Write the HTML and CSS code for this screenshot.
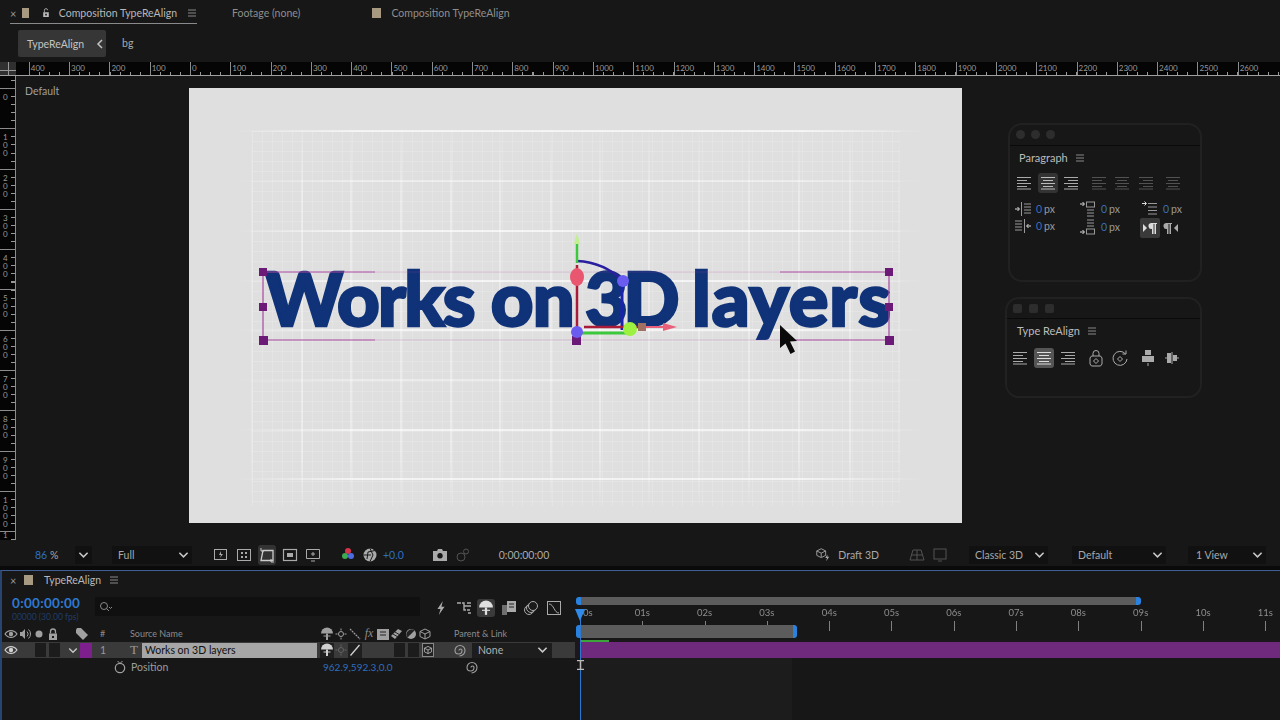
FILE: index.html
```html
<!doctype html>
<html lang="en">
<head>
	<meta charset="UTF-8">
	<title>Composition TypeReAlign</title>
	<link rel="stylesheet" href="styles.css">
</head>
<body>
	<svg class="defs" width="0" height="0">
		<symbol id="menu" viewBox="0 0 10 10"><path d="M1 2h8M1 5h8M1 8h8" stroke="currentColor" fill="none"/></symbol>
		<symbol id="chev" viewBox="0 0 12 8"><path d="M1.500 1.500 6 6l4.500-4.500" stroke="currentColor" stroke-width="1.700" fill="none"/></symbol>
		<symbol id="al-l" viewBox="0 0 16 16"><path d="M1 2.500h14M1 5.500h10M1 8.500h14M1 11.500h10M1 14h14" stroke="currentColor" fill="none"/></symbol>
		<symbol id="al-c" viewBox="0 0 16 16"><path d="M1 2.500h14M3 5.500h10M1 8.500h14M3 11.500h10M1 14h14" stroke="currentColor" fill="none"/></symbol>
		<symbol id="al-r" viewBox="0 0 16 16"><path d="M1 2.500h14M5 5.500h10M1 8.500h14M5 11.500h10M1 14h14" stroke="currentColor" fill="none"/></symbol>
		<symbol id="in-l" viewBox="0 0 18 16"><path d="M7.500 1v14M10 3h7M10 6h7M10 9h7M10 12h7" stroke="currentColor" fill="none"/><path d="M1 8h4M3.500 6l2 2-2 2" stroke="#ddd" fill="none"/></symbol>
		<symbol id="in-r" viewBox="0 0 18 16"><path d="M10.500 1v14M1 3h7M1 6h7M1 9h7M1 12h7" stroke="currentColor" fill="none"/><path d="M17 8h-4M14.500 6l-2 2 2 2" stroke="#ddd" fill="none"/></symbol>
		<symbol id="in-t" viewBox="0 0 18 16"><path d="M1 3h4M3.500 1l2 2-2 2" stroke="#ddd" fill="none"/><rect x="7.500" y="1" width="8" height="5" stroke="currentColor" fill="none"/><path d="M8 9h7M8 12h7M8 15h7" stroke="currentColor" fill="none"/></symbol>
		<symbol id="in-b" viewBox="0 0 18 16"><path d="M8 1h7M8 4h7M8 7h7" stroke="currentColor" fill="none"/><path d="M1 13h4M3.500 11l2 2-2 2" stroke="#ddd" fill="none"/><rect x="7.500" y="10" width="8" height="5" stroke="currentColor" fill="none"/></symbol>
		<symbol id="in-f" viewBox="0 0 18 16"><path d="M1 2.500h4M3.500 .5l2 2-2 2" stroke="#ddd" fill="none"/><path d="M7 2.500h9M7 6h9M7 9.500h9M7 13h9" stroke="currentColor" fill="none"/></symbol>
		<symbol id="ltr" viewBox="0 0 16 16"><path d="M1 4l4 4-4 4z" fill="currentColor"/><path d="M9 3h6v1h-1v10h-1.500V4H11.500v10H10V9a3 3 0 0 1-1-6z" fill="currentColor"/></symbol>
		<symbol id="rtl" viewBox="0 0 16 16"><path d="M15 4l-4 4 4 4z" fill="currentColor"/><path d="M3 3h6v1H8v10H6.500V4H5.500v10H4V9a3 3 0 0 1-1-6z" fill="currentColor"/></symbol>
		<symbol id="lock-c" viewBox="0 0 16 18"><path d="M5 7V4.500a3 3 0 0 1 6 0V7" stroke="currentColor" fill="none"/><path d="M3.500 7h9l1.500 2v6l-1.500 2h-9L2 15V9z" stroke="currentColor" fill="none"/><path d="M8 9.500 10.500 12 8 14.500 5.500 12z" stroke="currentColor" fill="none"/></symbol>
		<symbol id="rot-c" viewBox="0 0 16 18"><path d="M13.500 5A7 7 0 1 0 15 10" stroke="currentColor" fill="none"/><path d="M10.500 5h3.500V1.500" stroke="currentColor" fill="none"/><path d="M8 7.500 10.500 10 8 12.500 5.500 10z" stroke="currentColor" fill="none"/></symbol>
		<symbol id="dist-v" viewBox="0 0 16 18"><path d="M5 1h6v5H5zM2 7h12v6H2z" fill="currentColor"/><path d="M8 14v3" stroke="currentColor"/></symbol>
		<symbol id="dist-h" viewBox="0 0 16 18"><path d="M1 9h2M13 9h2M8 3v12" stroke="currentColor" fill="none"/><path d="M3 4h4v10H3zM9 6h4v6H9z" fill="currentColor"/></symbol>
		<symbol id="eye" viewBox="0 0 14 14"><path d="M1 7c3-4.500 9-4.500 12 0-3 4.500-9 4.500-12 0z" stroke="currentColor" stroke-width="1.200" fill="none"/><circle cx="7" cy="7" r="2.200" fill="currentColor"/></symbol>
		<symbol id="speaker" viewBox="0 0 14 14"><path d="M2 5h2l3-3v10L4 9H2z" fill="currentColor"/><path d="M9 4.500a3.500 3.500 0 0 1 0 5M10.500 2.500a6 6 0 0 1 0 9" stroke="currentColor" fill="none"/></symbol>
		<symbol id="solo" viewBox="0 0 14 14"><circle cx="7" cy="7" r="3.500" fill="currentColor"/></symbol>
		<symbol id="lock" viewBox="0 0 14 14"><path d="M4.500 6.500V4.500a2.500 2.500 0 0 1 5 0v2" stroke="currentColor" stroke-width="1.300" fill="none"/><path d="M3 6.500h8V13H3zM6 9v2h2V9z" fill="currentColor" fill-rule="evenodd"/></symbol>
		<symbol id="tag" viewBox="0 0 14 14"><path d="M1 3l1-2h4l7 7-5 5-7-7z" fill="currentColor"/></symbol>
		<symbol id="shy" viewBox="0 0 14 14"><path d="M1 6.500a6 6 0 0 1 12 0z" fill="currentColor"/><path d="M6 6.500h2V13H6z" fill="currentColor"/><path d="M3.500 9h7" stroke="currentColor"/></symbol>
		<symbol id="sun" viewBox="0 0 14 14"><circle cx="7" cy="7" r="2.500" stroke="currentColor" fill="none"/><path d="M7 1.500v2M7 10.500v2M1.500 7h2M10.500 7h2" stroke="currentColor"/></symbol>
		<symbol id="slash" viewBox="0 0 14 14"><path d="M2 2l10 10" stroke="currentColor" stroke-width="1.200" stroke-dasharray="2 .7"/></symbol>
		<symbol id="slash-b" viewBox="0 0 14 14"><path d="M2.500 12.500 11.500 2" stroke="currentColor" stroke-width="1.300"/></symbol>
		<symbol id="blend" viewBox="0 0 14 14"><rect x="1" y="2" width="12" height="11" fill="currentColor"/><path d="M4 5h6M4 8h6" stroke="#222"/></symbol>
		<symbol id="layers" viewBox="0 0 14 14"><path d="M1 9 8 2l4 2-7 8z" fill="currentColor"/><path d="M3 7l5 3M5 5l5 3" stroke="#222"/></symbol>
		<symbol id="half" viewBox="0 0 14 14"><circle cx="7" cy="7" r="5" fill="currentColor"/><path d="M3.500 10.500 10.500 3.500 A5 5 0 0 0 3.500 10.500z" fill="#222"/></symbol>
		<symbol id="cube" viewBox="0 0 14 14"><path d="M7 2l5 2.500v5L7 12l-5-2.500v-5zM2 4.500 7 7l5-2.500M7 7v5" stroke="currentColor" fill="none"/></symbol>
		<symbol id="spiral" viewBox="0 0 14 14"><path d="M7 7.500a1.500 1.500 0 0 1 3 0 3.500 3.500 0 0 1-7 0 5 5 0 0 1 5-5 5 5 0 0 1 5 5 5.500 5.500 0 0 1-5.500 5.500" stroke="currentColor" stroke-width="1.100" fill="none"/></symbol>
		<symbol id="watch" viewBox="0 0 14 14"><circle cx="7" cy="8" r="4.700" stroke="currentColor" stroke-width="1.200" fill="none"/><path d="M4.500 1l2 2M9.500 1l-2 2" stroke="currentColor"/></symbol>
		<symbol id="bolt" viewBox="0 0 14 18"><path d="M9 1 3 10h3.500L4.500 17 11 7.500H7.500z" fill="currentColor"/></symbol>
		<symbol id="tree" viewBox="0 0 16 16"><path d="M1 3h4M6 3h2v7h2M8 6h3M11 3h4M11 6h4M11 10h3M12 13h3" stroke="currentColor" stroke-width="1.400" fill="none"/></symbol>
		<symbol id="precomp" viewBox="0 0 16 16"><path d="M6 1h9v11H6z" fill="currentColor"/><path d="M1 5h5v10H1z" fill="currentColor" opacity=".6"/><path d="M8 4h5M8 7h5" stroke="#222"/></symbol>
		<symbol id="motion" viewBox="0 0 16 16"><circle cx="6" cy="10" r="4.500" stroke="currentColor" fill="none"/><circle cx="8" cy="8" r="4.500" stroke="currentColor" fill="none"/><circle cx="10" cy="6" r="4.500" stroke="currentColor" fill="#1a1a1a"/></symbol>
		<symbol id="graph" viewBox="0 0 16 16"><rect x="1.500" y="1.500" width="13" height="13" stroke="currentColor" fill="none"/><path d="M3 4c5 0 5 9 10 9" stroke="currentColor" fill="none"/></symbol>
		<symbol id="snap" viewBox="0 0 16 16"><rect x="1.500" y="2.500" width="12" height="10" stroke="currentColor" fill="none"/><path d="M8 4 6 8h2l-1 3 3-4H8z" fill="currentColor"/></symbol>
		<symbol id="grid-ic" viewBox="0 0 16 16"><rect x="1.500" y="2.500" width="13" height="11" stroke="currentColor" fill="none"/><path d="M5 5h2v2H5zM9 5h2v2H9zM5 9h2v2H5zM9 9h2v2H9z" fill="currentColor"/></symbol>
		<symbol id="mask" viewBox="0 0 16 16"><path d="M4 3.500h10v10H2z" stroke="currentColor" stroke-width="1.300" fill="none"/><path d="M2 1v3h3M12 12v3h3" stroke="currentColor" fill="none"/></symbol>
		<symbol id="safe" viewBox="0 0 16 16"><rect x="1.500" y="2.500" width="13" height="11" stroke="currentColor" stroke-width="1.200" fill="none"/><rect x="5" y="6" width="6" height="4" fill="currentColor"/></symbol>
		<symbol id="region" viewBox="0 0 16 16"><path d="M1.500 2.500h13v9h-13zM8 5v4M6 7h4M6 14h4" stroke="currentColor" fill="none"/></symbol>
		<symbol id="color" viewBox="0 0 16 16"><circle cx="8" cy="4" r="3" fill="#d8344c"/><circle cx="5" cy="9" r="3" fill="#3eaa52"/><circle cx="11" cy="9" r="3" fill="#4c6de0"/></symbol>
		<symbol id="aperture" viewBox="0 0 16 16"><circle cx="8" cy="8" r="6.500" fill="currentColor"/><path d="M8 1.500 11 8 8 14.500M1.500 8H9M13 3.500 6 5l-1 7" stroke="#1a1a1a" fill="none"/></symbol>
		<symbol id="camera" viewBox="0 0 16 16"><path d="M1 4h4l1-2h4l1 2h4v10H1zM8 6a2.800 2.800 0 1 0 .01 0z" fill="currentColor" fill-rule="evenodd"/></symbol>
		<symbol id="show-snap" viewBox="0 0 16 16"><circle cx="6" cy="10" r="4" stroke="currentColor" fill="none"/><circle cx="11" cy="4.500" r="2.500" stroke="currentColor" fill="none"/></symbol>
		<symbol id="draft" viewBox="0 0 18 16"><path d="M7 1.500l5 2.500v5l-5 2.500L2 9V4zM2 4l5 2.500L12 4M7 6.500V11" stroke="currentColor" fill="none"/><path d="M14 8l-2.500 4h2l-1 3.500 3.500-5h-2z" fill="currentColor"/></symbol>
		<symbol id="floor" viewBox="0 0 16 16"><path d="M4 3h8l3 10H1zM8 3v10M2.500 8h11" stroke="currentColor" fill="none"/></symbol>
		<symbol id="frame-ic" viewBox="0 0 16 16"><rect x="2" y="2" width="12" height="10" stroke="currentColor" fill="none"/><path d="M6 14h4" stroke="currentColor"/></symbol>
	</svg>

	<div class="app">
		<div class="tabs">
			<div class="tab tab-active">
				<span class="tab-x">×</span>
				<span class="swatch"></span>
				<svg class="tab-lock" viewBox="0 0 10 12"><path d="M3 5V2.500a2 2 0 0 1 4 0" stroke="currentColor" fill="none"/><path d="M1.500 5h7v6h-7zM4 7v2h2V7z" fill="currentColor" fill-rule="evenodd"/></svg>
				<span class="tab-name">Composition TypeReAlign</span>
				<svg class="ic-menu"><use href="#menu"/></svg>
			</div>
			<span class="tab tab-footage">Footage (none)</span>
			<div class="tab tab-comp2">
				<span class="swatch"></span>
				<span>Composition TypeReAlign</span>
			</div>
		</div>

		<div class="crumbs">
			<div class="crumb-on"><span>TypeReAlign</span><svg class="crumb-arrow" viewBox="0 0 8 10"><path d="M6 1 2 5l4 4" stroke="currentColor" stroke-width="1.500" fill="none"/></svg></div>
			<span class="crumb">bg</span>
		</div>

		<div class="hruler">
			<div class="hruler-corner"></div>
			<div class="hruler-scale">
				<span>400</span><span>300</span><span>200</span><span>100</span><span>0</span><span>100</span><span>200</span><span>300</span><span>400</span><span>500</span><span>600</span><span>700</span><span>800</span><span>900</span><span>1000</span><span>1100</span><span>1200</span><span>1300</span><span>1400</span><span>1500</span><span>1600</span><span>1700</span><span>1800</span><span>1900</span><span>2000</span><span>2100</span><span>2200</span><span>2300</span><span>2400</span><span>2500</span><span>2600</span>
			</div>
		</div>

		<div class="viewer">
			<div class="vruler">
				<span>0</span><span>100</span><span>200</span><span>300</span><span>400</span><span>500</span><span>600</span><span>700</span><span>800</span><span>900</span><span>1000</span><span>1</span>
			</div>
			<div class="canvas">
				<span class="view-name">Default</span>

				<div class="comp">
					<svg class="comp-grid" viewBox="189 88 773 435">
						<defs>
							<pattern id="fine" x="252" y="131" width="10" height="10" patternUnits="userSpaceOnUse">
								<path d="M0 0V10M0 0H10" stroke="#fff" stroke-opacity=".3" fill="none"/>
							</pattern>
							<linearGradient id="fade-x" gradientUnits="userSpaceOnUse" x1="235" y1="0" x2="925" y2="0">
								<stop offset="0" stop-color="#fff" stop-opacity="0"/>
								<stop offset=".18" stop-color="#fff" stop-opacity=".85"/>
								<stop offset=".82" stop-color="#fff" stop-opacity=".85"/>
								<stop offset="1" stop-color="#fff" stop-opacity="0"/>
							</linearGradient>
							<linearGradient id="fade-y" gradientUnits="userSpaceOnUse" x1="0" y1="125" x2="0" y2="510">
								<stop offset="0" stop-color="#fff" stop-opacity="0"/>
								<stop offset=".2" stop-color="#fff" stop-opacity=".7"/>
								<stop offset=".85" stop-color="#fff" stop-opacity=".7"/>
								<stop offset="1" stop-color="#fff" stop-opacity="0"/>
							</linearGradient>
						</defs>
						<rect x="252" y="131" width="648" height="375" fill="url(#fine)"/>
						<path class="grid-v" d="M302 125V510M351 125V510M401 125V510M451 125V510M500 125V510M551 125V510M600 125V510M649 125V510M699 125V510M749 125V510M799 125V510M850 125V510"/>
						<path class="grid-v grid-v-out" d="M252 125V510M899 125V510"/>
						<path class="grid-h" d="M235 131H925M235 231H925M235 281H925M235 330H925M235 430H925M235 479H925"/>
						<path class="grid-h grid-h-soft" d="M235 181H925M235 380H925"/>
					</svg>
					<div class="comp-text"><span class="w-works">Works</span> on <span class="w-3d">3D</span> <span class="w-layers">layers</span></div>
					<svg class="gizmo" viewBox="189 88 773 435">
						<path d="M263 272H375M780 272H889M263 340H375M780 340H889M263 272V340M889 272V340" stroke="#a8479f" stroke-width="1.200" fill="none"/>
						<path d="M375 272H780M375 340H780" stroke="#a8479f" stroke-opacity=".25" fill="none"/>
						<path d="M259 268h8v8h-8zM259 303h8v8h-8zM259 336h9v9h-9zM885 268h8v8h-8zM885 303h8v8h-8zM885 336h9v9h-9zM572 336h9v9h-9z" fill="#6b1a78"/>
						<path d="M577 261C597 262 612 270 623 281" stroke="#2a1fa0" stroke-width="2.500" fill="none"/>
						<path d="M622 285V330" stroke="#1a22b0" stroke-width="3"/>
						<path d="M577 334V265" stroke="#a81c3a" stroke-width="2.500"/>
						<path d="M577 263V243" stroke="#3cc83c" stroke-width="2.500"/>
						<path d="M574 244l3-11 3 11z" fill="#c0f090"/>
						<path d="M577 333H630" stroke="#3cc83c" stroke-width="3"/>
						<path d="M584 327H640" stroke="#a81c3a" stroke-width="2.500"/>
						<path d="M640 327H665" stroke="#e8607a" stroke-width="2"/>
						<path d="M663 323l14 4-14 4z" fill="#e8607a"/>
						<ellipse cx="577" cy="277" rx="7" ry="9" fill="#e85670"/>
						<circle cx="623" cy="281" r="6" fill="#6a5cf0"/>
						<circle cx="577" cy="332" r="6" fill="#6a5cf0"/>
						<circle cx="630" cy="329" r="7" fill="#9cf040"/>
						<rect x="638" y="323" width="8" height="8" fill="#a07060"/>
						<path d="M780 325V348L785.500 343.500 790.500 354 795 351.500 790 341.500 797 341z" fill="#0a0a0a"/>
					</svg>
				</div>

				<div class="float-panel float-para">
					<div class="float-title"><i></i><i></i><i></i></div>
					<div class="float-head"><span>Paragraph</span><svg class="ic-menu"><use href="#menu"/></svg></div>
					<div class="align-row">
						<svg class="ic-a"><use href="#al-l"/></svg>
						<span class="align-on"><svg class="ic-a"><use href="#al-c"/></svg></span>
						<svg class="ic-a"><use href="#al-r"/></svg>
						<svg class="ic-a dim gap-l"><use href="#al-l"/></svg>
						<svg class="ic-a dim"><use href="#al-c"/></svg>
						<svg class="ic-a dim"><use href="#al-r"/></svg>
						<svg class="ic-a dim gap-l"><use href="#al-c"/></svg>
					</div>
					<div class="indent-grid">
						<div class="indent"><svg class="ic-i"><use href="#in-l"/></svg><b>0</b> px</div>
						<div class="indent"><svg class="ic-i"><use href="#in-t"/></svg><b>0</b> px</div>
						<div class="indent"><svg class="ic-i"><use href="#in-f"/></svg><b>0</b> px</div>
						<div class="indent"><svg class="ic-i"><use href="#in-r"/></svg><b>0</b> px</div>
						<div class="indent indent-low"><svg class="ic-i"><use href="#in-b"/></svg><b>0</b> px</div>
						<div class="dir-btns">
							<span class="dir-on"><svg class="ic-d"><use href="#ltr"/></svg></span>
							<svg class="ic-d"><use href="#rtl"/></svg>
						</div>
					</div>
				</div>

				<div class="float-panel float-type">
					<div class="float-title float-title-sq"><i></i><i></i><i></i></div>
					<div class="float-head"><span>Type ReAlign</span><svg class="ic-menu"><use href="#menu"/></svg></div>
					<div class="align-row align-type">
						<svg class="ic-a"><use href="#al-l"/></svg>
						<span class="align-on align-on-lit"><svg class="ic-a"><use href="#al-c"/></svg></span>
						<svg class="ic-a"><use href="#al-r"/></svg>
						<svg class="ic-t gap-l"><use href="#lock-c"/></svg>
						<svg class="ic-t"><use href="#rot-c"/></svg>
						<svg class="ic-t gap-l"><use href="#dist-v"/></svg>
						<svg class="ic-t"><use href="#dist-h"/></svg>
					</div>
				</div>
			</div>
		</div>

		<div class="toolbar">
			<span class="zoom-val"><b>86</b> %</span>
			<span class="dd dd-zoom"><svg class="ic-chev"><use href="#chev"/></svg></span>
			<span class="dd dd-full">Full<svg class="ic-chev"><use href="#chev"/></svg></span>
			<div class="tool-icons tool-view">
				<svg class="ic-tool"><use href="#snap"/></svg>
				<svg class="ic-tool"><use href="#grid-ic"/></svg>
				<span class="tool-on"><svg class="ic-tool"><use href="#mask"/></svg></span>
				<svg class="ic-tool"><use href="#safe"/></svg>
				<svg class="ic-tool"><use href="#region"/></svg>
			</div>
			<div class="tool-icons tool-color">
				<svg class="ic-tool"><use href="#color"/></svg>
				<svg class="ic-tool"><use href="#aperture"/></svg>
				<b class="exposure">+0.0</b>
			</div>
			<div class="tool-icons tool-cam">
				<svg class="ic-tool"><use href="#camera"/></svg>
				<svg class="ic-tool dim"><use href="#show-snap"/></svg>
			</div>
			<span class="tool-time">0:00:00:00</span>
			<div class="toolbar-right">
				<span class="draft"><svg class="ic-draft"><use href="#draft"/></svg>Draft 3D</span>
				<div class="tool-icons tool-floor">
					<svg class="ic-tool dim"><use href="#floor"/></svg>
					<svg class="ic-tool dim"><use href="#frame-ic"/></svg>
				</div>
				<span class="dd dd-classic">Classic 3D<svg class="ic-chev"><use href="#chev"/></svg></span>
				<span class="dd dd-default">Default<svg class="ic-chev"><use href="#chev"/></svg></span>
				<span class="dd dd-view">1 View<svg class="ic-chev"><use href="#chev"/></svg></span>
			</div>
		</div>

		<div class="timeline">
			<div class="tl-tab">
				<span class="tab-x">×</span>
				<span class="swatch"></span>
				<span class="tl-name">TypeReAlign</span>
				<svg class="ic-menu"><use href="#menu"/></svg>
			</div>
			<div class="tl-body">
				<div class="tl-left">
					<div class="tl-ctrl">
						<div class="timecode"><b>0:00:00:00</b><span>00000 (30.00 fps)</span></div>
						<div class="search">
							<svg class="ic-search" viewBox="0 0 14 12"><circle cx="5" cy="5" r="3.500" stroke="currentColor" fill="none"/><path d="M7.500 7.500 10 10M10 6l1.500 1.500L13 6" stroke="currentColor" fill="none"/></svg>
						</div>
						<div class="tl-icons">
							<svg class="ic-tl"><use href="#bolt"/></svg>
							<svg class="ic-tl"><use href="#tree"/></svg>
							<span class="tl-icon-on"><svg class="ic-tl"><use href="#shy"/></svg></span>
							<svg class="ic-tl"><use href="#precomp"/></svg>
							<svg class="ic-tl"><use href="#motion"/></svg>
							<svg class="ic-tl"><use href="#graph"/></svg>
						</div>
					</div>
					<div class="tl-head">
						<div class="c-av">
							<svg class="ic-sm"><use href="#eye"/></svg>
							<svg class="ic-sm"><use href="#speaker"/></svg>
							<svg class="ic-sm"><use href="#solo"/></svg>
							<svg class="ic-sm"><use href="#lock"/></svg>
						</div>
						<div class="c-tag"><svg class="ic-sm"><use href="#tag"/></svg></div>
						<div class="c-num">#</div>
						<div class="c-name">Source Name</div>
						<div class="c-sw">
							<svg class="ic-sm"><use href="#shy"/></svg>
							<svg class="ic-sm"><use href="#sun"/></svg>
							<svg class="ic-sm"><use href="#slash"/></svg>
							<i class="fx">fx</i>
							<svg class="ic-sm"><use href="#blend"/></svg>
							<svg class="ic-sm"><use href="#layers"/></svg>
							<svg class="ic-sm"><use href="#half"/></svg>
							<svg class="ic-sm"><use href="#cube"/></svg>
						</div>
						<div class="c-parent">Parent &amp; Link</div>
					</div>
					<div class="tl-layer">
						<div class="c-av">
							<svg class="ic-sm ic-lit"><use href="#eye"/></svg>
							<span class="sw-box sw-a"></span><span class="sw-box"></span>
						</div>
						<div class="c-tag">
							<svg class="ic-twirl"><use href="#chev"/></svg>
							<span class="label-purple"></span>
						</div>
						<div class="c-num">1</div>
						<div class="c-name">
							<span class="type-t">T</span>
							<span class="layer-name">Works on 3D layers</span>
						</div>
						<div class="c-sw">
							<span class="sw-dark"><svg class="ic-sm ic-lit"><use href="#shy"/></svg></span>
							<svg class="ic-sm dim"><use href="#sun"/></svg>
							<span class="sw-dark"><svg class="ic-sm ic-lit"><use href="#slash-b"/></svg></span>
							<span class="sw-box sw-b"></span><span class="sw-box"></span>
							<span class="sw-3d"><svg class="ic-sm ic-lit"><use href="#cube"/></svg></span>
						</div>
						<div class="c-parent">
							<svg class="ic-sm"><use href="#spiral"/></svg>
							<span class="parent-dd">None<svg class="ic-chev"><use href="#chev"/></svg></span>
						</div>
					</div>
					<div class="tl-prop">
						<svg class="ic-sm"><use href="#watch"/></svg>
						<span class="prop-name">Position</span>
						<span class="prop-val">962.9,592.3,0.0</span>
						<svg class="ic-sm"><use href="#spiral"/></svg>
					</div>
				</div>
				<div class="tl-right">
					<div class="work-row"><div class="work-bar"></div></div>
					<div class="time-labels">
						<span>00s</span><span>01s</span><span>02s</span><span>03s</span><span>04s</span><span>05s</span><span>06s</span><span>07s</span><span>08s</span><span>09s</span><span>10s</span><span>11s</span>
					</div>
					<div class="time-ticks"><div class="nav-bar"></div></div>
					<div class="layer-track"><div class="green-line"></div><div class="purple-bar"></div></div>
					<div class="tracks-rest"></div>
					<div class="playhead"></div>
					<svg class="ibeam" viewBox="0 0 7 10"><path d="M0 .5h7M0 9.500h7M3.500 0v10" stroke="#bbb" stroke-width="1.500"/></svg>
				</div>
			</div>
		</div>
	</div>
</body>
</html>
```

FILE: styles.css
```css
html, body{
	margin: 0;
	padding: 0;
	background: #171717;
	overflow: hidden;
}
.defs{
	position: absolute;
}
.app{
	width: 1280px;
	height: 720px;
	display: flex;
	flex-direction: column;
	font-family: "Lato", "Noto Sans", sans-serif;
	font-size: 10.500px;
	color: #aaa;
	background: #171717;
	filter: blur(.4px);
}
svg{
	display: block;
	flex: none;
}
b{
	font-weight: 400;
}
.dim{
	opacity: .4;
}

/* tabs */
.tabs{
	height: 30px;
	display: flex;
	align-items: flex-start;
	flex: none;
}
.tab{
	display: flex;
	align-items: center;
	height: 20px;
	margin-top: 1px;
	padding-top: 2px;
	color: #8e8e8e;
	white-space: nowrap;
}
.tab-active{
	width: 187px;
	margin-left: 10px;
	color: #b8b8b8;
	border-bottom: 1px solid #8a8a8a;
}
.tab-x{
	width: 8px;
	font-size: 11px;
	color: #999;
}
.swatch{
	width: 9px;
	height: 10px;
	background: #a89a80;
	margin-left: 6px;
}
.tab-lock{
	width: 8px;
	height: 10px;
	margin-left: 13px;
	color: #bbb;
}
.tab-name{
	margin-left: 9px;
	margin-right: 10px;
}
.ic-menu{
	width: 10px;
	height: 10px;
	color: #888;
}
.tab-footage{
	margin-left: 35px;
}
.tab-comp2{
	margin-left: 66px;
}
.tab-comp2 span:last-child{
	margin-left: 10px;
}
.crumbs{
	height: 32px;
	display: flex;
	align-items: flex-start;
	flex: none;
	padding-left: 18px;
	color: #aaa;
}
.crumb-on{
	width: 88px;
	height: 27px;
	box-sizing: border-box;
	padding: 0 2px 0 9px;
	background: #363636;
	border-radius: 2px;
	display: flex;
	align-items: center;
	justify-content: space-between;
	color: #c4c4c4;
}
.crumb-arrow{
	width: 8px;
	height: 10px;
}
.crumb{
	margin: 7px 0 0 16px;
}

/* rulers */
.hruler{
	height: 14px;
	display: flex;
	flex: none;
	background: #050505;
	border-bottom: 1px solid #a0a0a0;
	box-sizing: border-box;
}
.hruler-corner{
	width: 16px;
	flex: none;
	background: #303030;
	background-image: linear-gradient(#999,#999), linear-gradient(#999,#999);
	background-size: 1px 100%, 100% 1px;
	background-position: 8px 0, 0 8px;
	background-repeat: no-repeat;
}
.hruler-scale{
	flex: 1;
	display: flex;
	overflow: hidden;
	padding-left: 12.800px;
	background-image: repeating-linear-gradient(90deg, #999 0 1px, transparent 1px 10.070px);
	background-size: 100% 3px;
	background-position: 12.800px bottom;
	background-repeat: no-repeat;
}
.hruler-scale span{
	flex: none;
	width: 40.300px;
	box-sizing: border-box;
	padding: 1px 0 0 1px;
	border-left: 1px solid #8c8c8c;
	font-size: 8px;
	line-height: 10px;
	color: #999;
}
.viewer{
	height: 464px;
	display: flex;
	flex: none;
}
.vruler{
	width: 16px;
	flex: none;
	box-sizing: border-box;
	padding-top: 12px;
	background-color: #050505;
	border-right: 1px solid #8c8c8c;
	background-image: repeating-linear-gradient(#999 0 1px, transparent 1px 8.060px);
	background-size: 4px 100%;
	background-position: right 4px;
	background-repeat: no-repeat;
	overflow: hidden;
}
.vruler span{
	display: block;
	height: 40.300px;
	box-sizing: border-box;
	padding: 5px 7px 0 3px;
	font-size: 8px;
	line-height: 8px;
	color: #999;
	word-break: break-all;
	background: linear-gradient(#8c8c8c,#8c8c8c) 0 0 / 100% 1px no-repeat;
}
.vruler span:last-child{
	height: 8px;
	padding-top: 0;
}

/* viewer */
.canvas{
	flex: 1;
	position: relative;
}
.view-name{
	position: absolute;
	left: 9px;
	top: 9px;
	color: #a0a0a0;
}
.comp{
	position: absolute;
	left: 173px;
	top: 12px;
	width: 773px;
	height: 435px;
	background: #dfdfdf;
}
.comp-grid, .gizmo{
	position: absolute;
	left: 0;
	top: 0;
	width: 773px;
	height: 435px;
}
.grid-v{
	stroke: url(#fade-y);
	fill: none;
}
.grid-v-out{
	opacity: .5;
}
.grid-h{
	stroke: url(#fade-x);
	stroke-width: 1.500;
	fill: none;
}
.grid-h-soft{
	opacity: .6;
}
.comp-text{
	position: absolute;
	left: 76px;
	top: 165px;
	font-family: "Lato", sans-serif;
	font-weight: 900;
	font-size: 74px;
	line-height: 90px;
	letter-spacing: -.7px;
	white-space: nowrap;
	color: #0f3278;
	-webkit-text-stroke: 2.500px #0f3278;
}
.w-works{
	letter-spacing: -1.700px;
}
.w-3d{
	margin-left: -6px;
	letter-spacing: -4.500px;
}
.w-layers{
	letter-spacing: 1px;
}

/* floating panels */
.float-panel{
	position: absolute;
	box-sizing: border-box;
	border: 2px solid #212121;
	border-radius: 14px;
	color: #b0b0b0;
}
.float-para{
	left: 992px;
	top: 47px;
	width: 194px;
	height: 159px;
}
.float-type{
	left: 989px;
	top: 221px;
	width: 197px;
	height: 101px;
}
.float-title{
	height: 21px;
	box-sizing: border-box;
	padding: 5px 0 0 6px;
	display: flex;
	gap: 6px;
	border-bottom: 1px solid #0a0a0a;
}
.float-title i{
	width: 9px;
	height: 9px;
	border-radius: 50%;
	background: #2d2d2d;
}
.float-title-sq{
	height: 20px;
	gap: 7px;
}
.float-title-sq i{
	border-radius: 2px;
}
.float-head{
	display: flex;
	align-items: center;
	gap: 7px;
	padding-left: 9px;
	height: 21px;
	margin-top: 1px;
	font-size: 11px;
	color: #bcbcbc;
}
.float-type .float-head{
	padding-left: 10px;
}
.align-row{
	display: flex;
	align-items: center;
	height: 20px;
	padding-left: 6px;
	gap: 7.500px;
	margin-top: 5px;
	color: #aaa;
}
.ic-a{
	width: 16px;
	height: 16px;
}
.align-on{
	width: 20px;
	height: 20px;
	margin: 0 -2px;
	display: flex;
	align-items: center;
	justify-content: center;
	background: #333;
	border-radius: 3px;
	color: #bbb;
}
.align-on-lit{
	background: #555;
	color: #ddd;
}
.gap-l{
	margin-left: 4px;
}
.align-type{
	margin-top: 7px;
	padding-left: 5px;
	gap: 8px;
}
.ic-t{
	width: 16px;
	height: 18px;
}
.indent-grid{
	display: grid;
	grid-template-columns: 65px 62px 50px;
	grid-auto-rows: 17px;
	padding: 7px 0 0 4px;
	font-size: 10.500px;
	color: #999;
}
.indent{
	display: flex;
	align-items: center;
	gap: 3px;
}
.indent b{
	color: #3a6fb8;
	margin-left: 1px;
	margin-right: -1px;
}
.indent-low{
	margin-top: 2px;
}
.ic-i{
	width: 18px;
	height: 16px;
	color: #999;
}
.dir-btns{
	display: flex;
	align-items: center;
	margin: 5px 0 0 -1px;
	color: #aaa;
}
.dir-on{
	width: 20px;
	height: 20px;
	display: flex;
	align-items: center;
	justify-content: center;
	background: #3a3a3a;
	border-radius: 2px;
	color: #ddd;
	margin-right: 3px;
}
.ic-d{
	width: 16px;
	height: 16px;
}

/* toolbar */
.toolbar{
	height: 30px;
	box-sizing: border-box;
	padding: 3px 0 0 35px;
	display: flex;
	align-items: center;
	flex: none;
	background: #171717;
	border-bottom: 4px solid #0a0a0a;
	color: #a8a8a8;
}
.zoom-val{
	width: 40px;
	flex: none;
}
.zoom-val b{
	color: #2f6fc0;
}
.dd{
	height: 18px;
	display: flex;
	align-items: center;
	justify-content: space-between;
	flex: none;
	box-sizing: border-box;
	background: #111;
	padding: 0 3px 0 6px;
}
.ic-chev{
	width: 11px;
	height: 8px;
	color: #c8c8c8;
}
.dd-zoom{
	width: 17px;
	padding: 0 3px;
}
.dd-full{
	width: 80px;
	margin-left: 20px;
}
.tool-icons{
	display: flex;
	align-items: center;
	gap: 7px;
	flex: none;
	color: #aaa;
}
.tool-view{
	margin-left: 21px;
}
.ic-tool{
	width: 16px;
	height: 16px;
}
.tool-on{
	width: 18px;
	height: 20px;
	margin: 0 -1px;
	display: flex;
	align-items: center;
	justify-content: center;
	background: #333;
	border-radius: 3px;
	color: #ccc;
}
.tool-color{
	margin-left: 19px;
	gap: 6px;
}
.exposure{
	color: #2f6fc0;
	margin-left: -1px;
}
.tool-cam{
	margin-left: 28px;
}
.tool-time{
	margin-left: 28px;
	width: 64px;
	flex: none;
	line-height: 18px;
	color: #aaa;
}
.toolbar-right{
	margin-left: auto;
	display: flex;
	align-items: center;
	flex: none;
}
.draft{
	display: flex;
	align-items: center;
	gap: 7px;
}
.ic-draft{
	width: 16px;
	height: 15px;
}
.tool-floor{
	margin-left: 30px;
}
.dd-classic{
	width: 79px;
	margin-left: 21px;
}
.dd-default{
	width: 94px;
	margin-left: 24px;
}
.dd-view{
	width: 78px;
	margin-left: 22px;
	margin-right: 14px;
	padding-left: 8px;
}

/* timeline */
.timeline{
	flex: 1;
	display: flex;
	flex-direction: column;
	border-top: 1px solid #3f5f95;
	border-left: 2px solid #2a4470;
	min-height: 0;
}
.tl-tab{
	height: 18px;
	display: flex;
	align-items: center;
	padding-left: 8px;
	flex: none;
	color: #b8b8b8;
}
.tl-name{
	margin: 0 8px 0 11px;
}
.tl-body{
	flex: 1;
	display: flex;
	min-height: 0;
}
.tl-left{
	width: 573px;
	flex: none;
}
.tl-ctrl{
	height: 36px;
	display: flex;
	align-items: flex-start;
	padding-left: 10px;
}
.timecode{
	width: 83px;
	flex: none;
	display: flex;
	flex-direction: column;
	padding-top: 6px;
}
.timecode b{
	font-size: 13.500px;
	line-height: 17px;
	font-weight: 700;
	letter-spacing: .3px;
	color: #2f78d0;
}
.timecode span{
	font-size: 8.500px;
	line-height: 10px;
	color: #1f3c66;
}
.search{
	width: 325px;
	height: 19px;
	margin-top: 8px;
	background: #101010;
	flex: none;
	display: flex;
	align-items: center;
	padding-left: 4px;
	box-sizing: border-box;
	color: #888;
}
.ic-search{
	width: 14px;
	height: 12px;
}
.tl-icons{
	margin: 10px 0 0 13px;
	display: flex;
	align-items: center;
	gap: 6.500px;
	color: #aaa;
}
.ic-tl{
	width: 16px;
	height: 16px;
}
.tl-icon-on{
	width: 18px;
	height: 18px;
	margin: 0 -1px;
	display: flex;
	align-items: center;
	justify-content: center;
	background: #3a3a3a;
	border-radius: 3px;
	color: #e0e0e0;
}
.tl-head{
	height: 17px;
	display: flex;
	align-items: center;
	font-size: 9px;
	color: #8c8c8c;
}
.ic-sm{
	width: 14px;
	height: 14px;
	color: #a0a0a0;
}
.ic-lit{
	color: #d0d0d0;
}
.c-av{
	width: 58px;
	flex: none;
	display: flex;
	align-items: center;
	padding-left: 2px;
	box-sizing: border-box;
}
.c-tag{
	width: 35px;
	flex: none;
	display: flex;
	align-items: center;
	padding-left: 15px;
	box-sizing: border-box;
}
.c-num{
	width: 35px;
	flex: none;
	padding-left: 5px;
	box-sizing: border-box;
}
.c-name{
	width: 190px;
	flex: none;
	display: flex;
	align-items: center;
}
.c-sw{
	width: 125px;
	flex: none;
	display: flex;
	align-items: center;
}
.c-parent{
	flex: 1;
	padding-left: 7px;
	display: flex;
	align-items: center;
}
.tl-head .c-parent{
	padding-left: 9px;
}
.fx{
	width: 14px;
	font-family: "Liberation Serif", serif;
	font-size: 12px;
	text-align: center;
}
.tl-layer{
	height: 16px;
	display: flex;
	align-items: center;
	background: #3a3a3a;
	color: #999;
}
.sw-box{
	width: 11px;
	height: 14px;
	background: #1c1c1c;
	margin-left: 3px;
	flex: none;
}
.sw-a{
	margin-left: 17px;
}
.ic-twirl{
	width: 10px;
	height: 7px;
	margin-left: -7px;
	color: #c4c4c4;
}
.label-purple{
	width: 12px;
	height: 15px;
	margin-left: 2px;
	background: #7e1f8e;
	flex: none;
}
.type-t{
	width: 12px;
	font-family: "Liberation Serif", serif;
	font-size: 13px;
	color: #999;
}
.layer-name{
	width: 175px;
	height: 15px;
	background: #a6a6a6;
	box-sizing: border-box;
	padding-left: 3px;
	font-size: 10.500px;
	line-height: 15px;
	color: #111;
}
.sw-dark{
	width: 14px;
	height: 15px;
	background: #1f1f1f;
	flex: none;
}
.sw-dark + .ic-sm + .sw-dark{
	margin-right: 29px;
}
.sw-3d{
	width: 12px;
	height: 14px;
	margin-left: 3px;
	background: #222;
	border: 1px solid #888;
	box-sizing: border-box;
	display: flex;
	align-items: center;
	justify-content: center;
	flex: none;
}
.sw-3d svg{
	width: 10px;
	height: 10px;
}
.parent-dd{
	width: 80px;
	height: 15px;
	margin-left: 6px;
	box-sizing: border-box;
	padding: 0 4px 0 6px;
	background: #1d1d1d;
	display: flex;
	align-items: center;
	justify-content: space-between;
	color: #b0b0b0;
	flex: none;
}
.tl-prop{
	height: 18px;
	display: flex;
	align-items: center;
	padding-left: 111px;
	color: #9c9c9c;
}
.prop-name{
	margin-left: 4px;
	width: 192px;
}
.prop-val{
	font-size: 10px;
	color: #2f6fc0;
	width: 141px;
}

/* time ruler */
.tl-right{
	flex: 1;
	position: relative;
	display: flex;
	flex-direction: column;
	min-width: 0;
}
.work-row{
	height: 17px;
	padding: 8px 0 0 1px;
	box-sizing: border-box;
	flex: none;
}
.work-bar{
	width: 565px;
	height: 8px;
	background: #5c5c5c;
	border-left: 5px solid #2a82e0;
	border-right: 5px solid #2a82e0;
	border-radius: 3px;
	box-sizing: border-box;
}
.time-labels{
	height: 15px;
	display: flex;
	flex: none;
	margin-left: -26.150px;
	font-size: 9.500px;
	line-height: 14px;
	color: #8e8e8e;
}
.time-labels span{
	width: 62.300px;
	flex: none;
	text-align: center;
}
.time-labels span:first-child{
	padding-left: 10px;
	box-sizing: border-box;
}
.time-ticks{
	height: 19px;
	flex: none;
	background-image: repeating-linear-gradient(90deg, #808080 0 1px, transparent 1px 62.300px);
	background-size: 100% 10px;
	background-position: 4.800px 0;
	background-repeat: no-repeat;
}
.nav-bar{
	width: 221px;
	height: 13px;
	margin: 4px 0 0 1px;
	background: #5c5c5c;
	border-left: 5px solid #2a82e0;
	border-right: 4px solid #2a82e0;
	border-radius: 3px;
	box-sizing: border-box;
}
.layer-track{
	height: 18px;
	flex: none;
	padding-left: 5px;
	background: #1c171d;
}
.green-line{
	width: 29px;
	height: 2px;
	background: #3aa33a;
}
.purple-bar{
	height: 16px;
	background: #6f2a7e;
}
.tracks-rest{
	flex: 1;
	width: 212px;
	margin-left: 5px;
	background: #1c1c1c;
}
.playhead{
	position: absolute;
	left: 5px;
	top: 20px;
	bottom: 0;
	width: 1px;
	background: #2f78d0;
}
.playhead::before{
	content: "";
	position: absolute;
	left: -5px;
	top: 0;
	border-left: 5.500px solid transparent;
	border-right: 5.500px solid transparent;
	border-top: 12px solid #2f8ae8;
}
.ibeam{
	position: absolute;
	left: 2px;
	top: 71px;
	width: 7px;
	height: 10px;
}
```
